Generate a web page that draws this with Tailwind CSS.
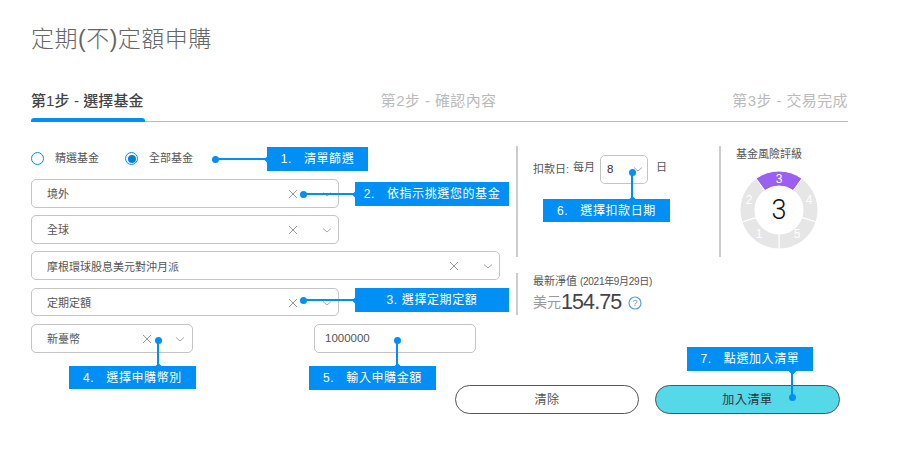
<!DOCTYPE html>
<html lang="zh-Hant">
<head>
    <meta charset="UTF-8">
    <title>定期(不)定額申購</title>
    <script src="https://cdn.jsdelivr.net/npm/@tailwindcss/browser@4"></script>
</head>
<body class="bg-white font-['Liberation_Sans','Noto_Sans_CJK_TC',sans-serif] text-[#555]">
<main class="relative w-[912px] h-[457px] overflow-hidden">
    <h1 class="pl-[31px] pt-[23px] h-[77px] text-[23px] leading-[33px] tracking-[0.5px] font-light text-[#666]">定期(不)定額申購</h1>

    <!-- steps -->
    <nav class="ml-[31px] w-[817px] h-[45px] border-b border-[#bbb] flex justify-between text-[15px] leading-[22px] tracking-[0.4px] text-[#bbb]">
        <div class="relative w-[114px] pt-[13px] font-medium tracking-[0.1px] text-[#444] whitespace-nowrap">第1步 - 選擇基金<span class="absolute left-0 bottom-[-1px] w-full h-[4px] bg-[#0090f5] rounded-t-[3px]"></span></div>
        <div class="pt-[13px] whitespace-nowrap">第2步 - 確認內容</div>
        <div class="pt-[13px] whitespace-nowrap">第3步 - 交易完成</div>
    </nav>

    <section class="flex mt-[24px] h-[207px]">
        <!-- form -->
        <div class="w-[516px] pl-[31px] flex flex-col gap-[7.5px] text-[11px]">
            <div class="h-[25.5px] flex items-center">
                <span class="size-[13px] rounded-full border border-[#0090f5]"></span>
                <span class="ml-[11px] w-[70px]">精選基金</span>
                <span class="size-[13px] rounded-full border border-[#0090f5] flex items-center justify-center"><span class="size-[8px] rounded-full bg-[#0080d8]"></span></span>
                <span class="ml-[11px]">全部基金</span>
            </div>
            <div class="relative w-[308px] h-[29px] border border-[#c4c4c4] rounded-[5px] flex items-center pl-[15px] pt-[2px]">境外
                <svg class="absolute right-[40px] top-[9px]" width="10" height="10" viewBox="0 0 10 10" fill="none" stroke="#999"><path d="M1 1l8 8M9 1l-8 8"/></svg>
                <svg class="absolute right-[6px] top-[12px]" width="10" height="5" viewBox="0 0 10 5" fill="none" stroke="#aaa"><path d="M1 .5l4 3.5 4-3.5"/></svg>
            </div>
            <div class="relative w-[308px] h-[29px] border border-[#c4c4c4] rounded-[5px] flex items-center pl-[15px] pt-[2px]">全球
                <svg class="absolute right-[40px] top-[9px]" width="10" height="10" viewBox="0 0 10 10" fill="none" stroke="#999"><path d="M1 1l8 8M9 1l-8 8"/></svg>
                <svg class="absolute right-[6px] top-[12px]" width="10" height="5" viewBox="0 0 10 5" fill="none" stroke="#aaa"><path d="M1 .5l4 3.5 4-3.5"/></svg>
            </div>
            <div class="relative w-[469px] h-[29px] border border-[#c4c4c4] rounded-[5px] flex items-center pl-[15px] pt-[2px]">摩根環球股息美元對沖月派
                <svg class="absolute right-[40px] top-[9px]" width="10" height="10" viewBox="0 0 10 10" fill="none" stroke="#999"><path d="M1 1l8 8M9 1l-8 8"/></svg>
                <svg class="absolute right-[6px] top-[12px]" width="10" height="5" viewBox="0 0 10 5" fill="none" stroke="#aaa"><path d="M1 .5l4 3.5 4-3.5"/></svg>
            </div>
            <div class="relative w-[308px] h-[29px] border border-[#c4c4c4] rounded-[5px] flex items-center pl-[15px] pt-[2px]">定期定額
                <svg class="absolute right-[40px] top-[9px]" width="10" height="10" viewBox="0 0 10 10" fill="none" stroke="#999"><path d="M1 1l8 8M9 1l-8 8"/></svg>
                <svg class="absolute right-[6px] top-[12px]" width="10" height="5" viewBox="0 0 10 5" fill="none" stroke="#aaa"><path d="M1 .5l4 3.5 4-3.5"/></svg>
            </div>
            <div class="flex gap-[121px]">
                <div class="relative w-[162px] h-[29px] border border-[#c4c4c4] rounded-[5px] flex items-center pl-[15px] pt-[2px]">新臺幣
                    <svg class="absolute right-[40px] top-[9px]" width="10" height="10" viewBox="0 0 10 10" fill="none" stroke="#999"><path d="M1 1l8 8M9 1l-8 8"/></svg>
                    <svg class="absolute right-[7px] top-[12px]" width="10" height="5" viewBox="0 0 10 5" fill="none" stroke="#aaa"><path d="M1 .5l4 3.5 4-3.5"/></svg>
                </div>
                <div class="w-[162px] h-[29px] border border-[#c4c4c4] rounded-[5px] flex items-center pl-[10px] pt-[1px] text-[11.5px]">1000000</div>
            </div>
        </div>

        <!-- right panels -->
        <div class="flex-1 text-[11px]">
            <div class="flex h-[111px]">
                <div class="w-[203px] border-l-2 border-[#ccc] pl-[15px] pt-[9px] flex items-start">
                    <span class="mt-[6px] w-[40px]">扣款日:</span>
                    <span class="mt-[4px] w-[27px]">每月</span>
                    <span class="relative w-[48px] h-[29px] border border-[#c4c4c4] rounded-[5px] flex items-center pl-[6px] pt-[1px] text-[11.5px] text-[#333]">8
                        <svg class="absolute right-[4px] top-[11px]" width="10" height="5" viewBox="0 0 10 5" fill="none" stroke="#aaa"><path d="M1 .5l4 3.5 4-3.5"/></svg>
                    </span>
                    <span class="ml-[8px] mt-[4px]">日</span>
                </div>
                <div class="border-l-2 border-[#ccc] pl-[15px] pt-[1px]">
                    <div class="leading-[14px]">基金風險評級</div>
                    <svg class="ml-[3px] mt-[9px]" width="80" height="80" viewBox="0 0 80 80" font-size="12" font-family="Liberation Sans" text-anchor="middle" fill="#fff">
                        <g stroke="#fff" stroke-width="1">
                            <path fill="#e6e6e6" transform="rotate(72 40 40)" d="M17.08 8.45A39 39 0 0 1 62.92 8.45L54.11 20.58A24 24 0 0 0 25.89 20.58Z"/>
                            <path fill="#e6e6e6" transform="rotate(144 40 40)" d="M17.08 8.45A39 39 0 0 1 62.92 8.45L54.11 20.58A24 24 0 0 0 25.89 20.58Z"/>
                            <path fill="#e6e6e6" transform="rotate(216 40 40)" d="M17.08 8.45A39 39 0 0 1 62.92 8.45L54.11 20.58A24 24 0 0 0 25.89 20.58Z"/>
                            <path fill="#e6e6e6" transform="rotate(288 40 40)" d="M17.08 8.45A39 39 0 0 1 62.92 8.45L54.11 20.58A24 24 0 0 0 25.89 20.58Z"/>
                            <path fill="#9b5ff2" d="M17.08 8.45A39 39 0 0 1 62.92 8.45L54.11 20.58A24 24 0 0 0 25.89 20.58Z"/>
                        </g>
                        <text x="40" y="12.5">3</text>
                        <text x="70" y="34">4</text>
                        <text x="58" y="68">5</text>
                        <text x="20" y="68">1</text>
                        <text x="10" y="34">2</text>
                        <text x="40" y="49" font-size="27" font-family="Roboto" font-weight="300" fill="#111">3</text>
                    </svg>
                </div>
            </div>
            <div class="mt-[16px] h-[42px] border-l-2 border-[#ccc] pl-[15px]">
                <div class="leading-[14px] pt-[1px]">最新淨值 <span class="text-[10px] tracking-[-0.3px]">(2021年9月29日)</span></div>
                <div class="flex items-center h-[27px]">
                    <span class="text-[14px] text-[#999]">美元</span>
                    <span class="text-[21.5px] tracking-[-0.9px] text-[#444]">154.75</span>
                    <svg class="ml-[7px]" width="14" height="14" viewBox="0 0 14 14" fill="none"><circle cx="7" cy="7" r="6" stroke="#5a9fd8" stroke-width="1.2"/><text x="7" y="10" font-size="9" font-family="Liberation Sans" text-anchor="middle" fill="#5a9fd8">?</text></svg>
                </div>
            </div>
        </div>
    </section>

    <!-- buttons -->
    <div class="flex gap-[16px] ml-[455px] mt-[32px]">
        <button class="w-[184px] h-[29px] rounded-full border border-[#555] bg-white text-[12px] tracking-[0.6px] text-[#555]">清除</button>
        <button class="w-[185px] h-[29px] rounded-full border border-[#555] bg-[#55d9e8] text-[12px] tracking-[0.6px] text-[#333]">加入清單</button>
    </div>

    <!-- annotations -->
    <div class="absolute left-[267px] top-[147px] w-[101px] h-[24px] bg-[#0090f5] text-white text-[12px] tracking-[0.6px] flex items-center justify-center"><span class="mr-[12px]">1.</span>清單篩選
        <span class="absolute right-full top-[11px] w-[50px] h-[2px] bg-[#0090f5]"></span>
        <span class="absolute left-[-2.5px] top-[9.5px] size-[5px] rotate-45 bg-[#0090f5]"></span>
        <span class="absolute left-[-55px] top-[8.5px] size-[7px] rounded-full bg-[#0090f5]"></span>
    </div>
    <div class="absolute left-[355px] top-[182px] w-[154px] h-[24px] bg-[#0090f5] text-white text-[12px] tracking-[0.6px] flex items-center justify-center"><span class="mr-[12px]">2.</span>依指示挑選您的基金
        <span class="absolute right-full top-[11px] w-[50px] h-[2px] bg-[#0090f5]"></span>
        <span class="absolute left-[-2.5px] top-[9.5px] size-[5px] rotate-45 bg-[#0090f5]"></span>
        <span class="absolute left-[-55px] top-[8.5px] size-[7px] rounded-full bg-[#0090f5]"></span>
    </div>
    <div class="absolute left-[355px] top-[288px] w-[154px] h-[24px] bg-[#0090f5] text-white text-[12px] tracking-[0.6px] flex items-center justify-center"><span class="mr-[4px]">3.</span>選擇定期定額
        <span class="absolute right-full top-[11px] w-[50px] h-[2px] bg-[#0090f5]"></span>
        <span class="absolute left-[-2.5px] top-[9.5px] size-[5px] rotate-45 bg-[#0090f5]"></span>
        <span class="absolute left-[-55px] top-[8.5px] size-[7px] rounded-full bg-[#0090f5]"></span>
    </div>
    <div class="absolute left-[69px] top-[366px] w-[127px] h-[23px] bg-[#0090f5] text-white text-[12px] tracking-[0.6px] flex items-center justify-center"><span class="mr-[12px]">4.</span>選擇申購幣別
        <span class="absolute left-[88px] bottom-full w-[2px] h-[24px] bg-[#0090f5]"></span>
        <span class="absolute left-[86.5px] top-[-2.5px] size-[5px] rotate-45 bg-[#0090f5]"></span>
        <span class="absolute left-[85.5px] top-[-29px] size-[7px] rounded-full bg-[#0090f5]"></span>
    </div>
    <div class="absolute left-[309px] top-[366px] w-[127px] h-[24px] bg-[#0090f5] text-white text-[12px] tracking-[0.6px] flex items-center justify-center"><span class="mr-[12px]">5.</span>輸入申購金額
        <span class="absolute left-[87px] bottom-full w-[2px] h-[24px] bg-[#0090f5]"></span>
        <span class="absolute left-[85.5px] top-[-2.5px] size-[5px] rotate-45 bg-[#0090f5]"></span>
        <span class="absolute left-[84.5px] top-[-29px] size-[7px] rounded-full bg-[#0090f5]"></span>
    </div>
    <div class="absolute left-[543px] top-[199px] w-[127px] h-[23px] bg-[#0090f5] text-white text-[12px] tracking-[0.6px] flex items-center justify-center"><span class="mr-[12px]">6.</span>選擇扣款日期
        <span class="absolute left-[88px] bottom-full w-[2px] h-[25px] bg-[#0090f5]"></span>
        <span class="absolute left-[86.5px] top-[-2.5px] size-[5px] rotate-45 bg-[#0090f5]"></span>
        <span class="absolute left-[85.5px] top-[-30px] size-[7px] rounded-full bg-[#0090f5]"></span>
    </div>
    <div class="absolute left-[687px] top-[347px] w-[126px] h-[24px] bg-[#0090f5] text-white text-[12px] tracking-[0.6px] flex items-center justify-center"><span class="mr-[12px]">7.</span>點選加入清單
        <span class="absolute left-[104px] top-full w-[2px] h-[24px] bg-[#0090f5]"></span>
        <span class="absolute left-[102.5px] top-[21.5px] size-[5px] rotate-45 bg-[#0090f5]"></span>
        <span class="absolute left-[101.5px] top-[47px] size-[7px] rounded-full bg-[#0090f5]"></span>
    </div>
</main>
</body>
</html>
